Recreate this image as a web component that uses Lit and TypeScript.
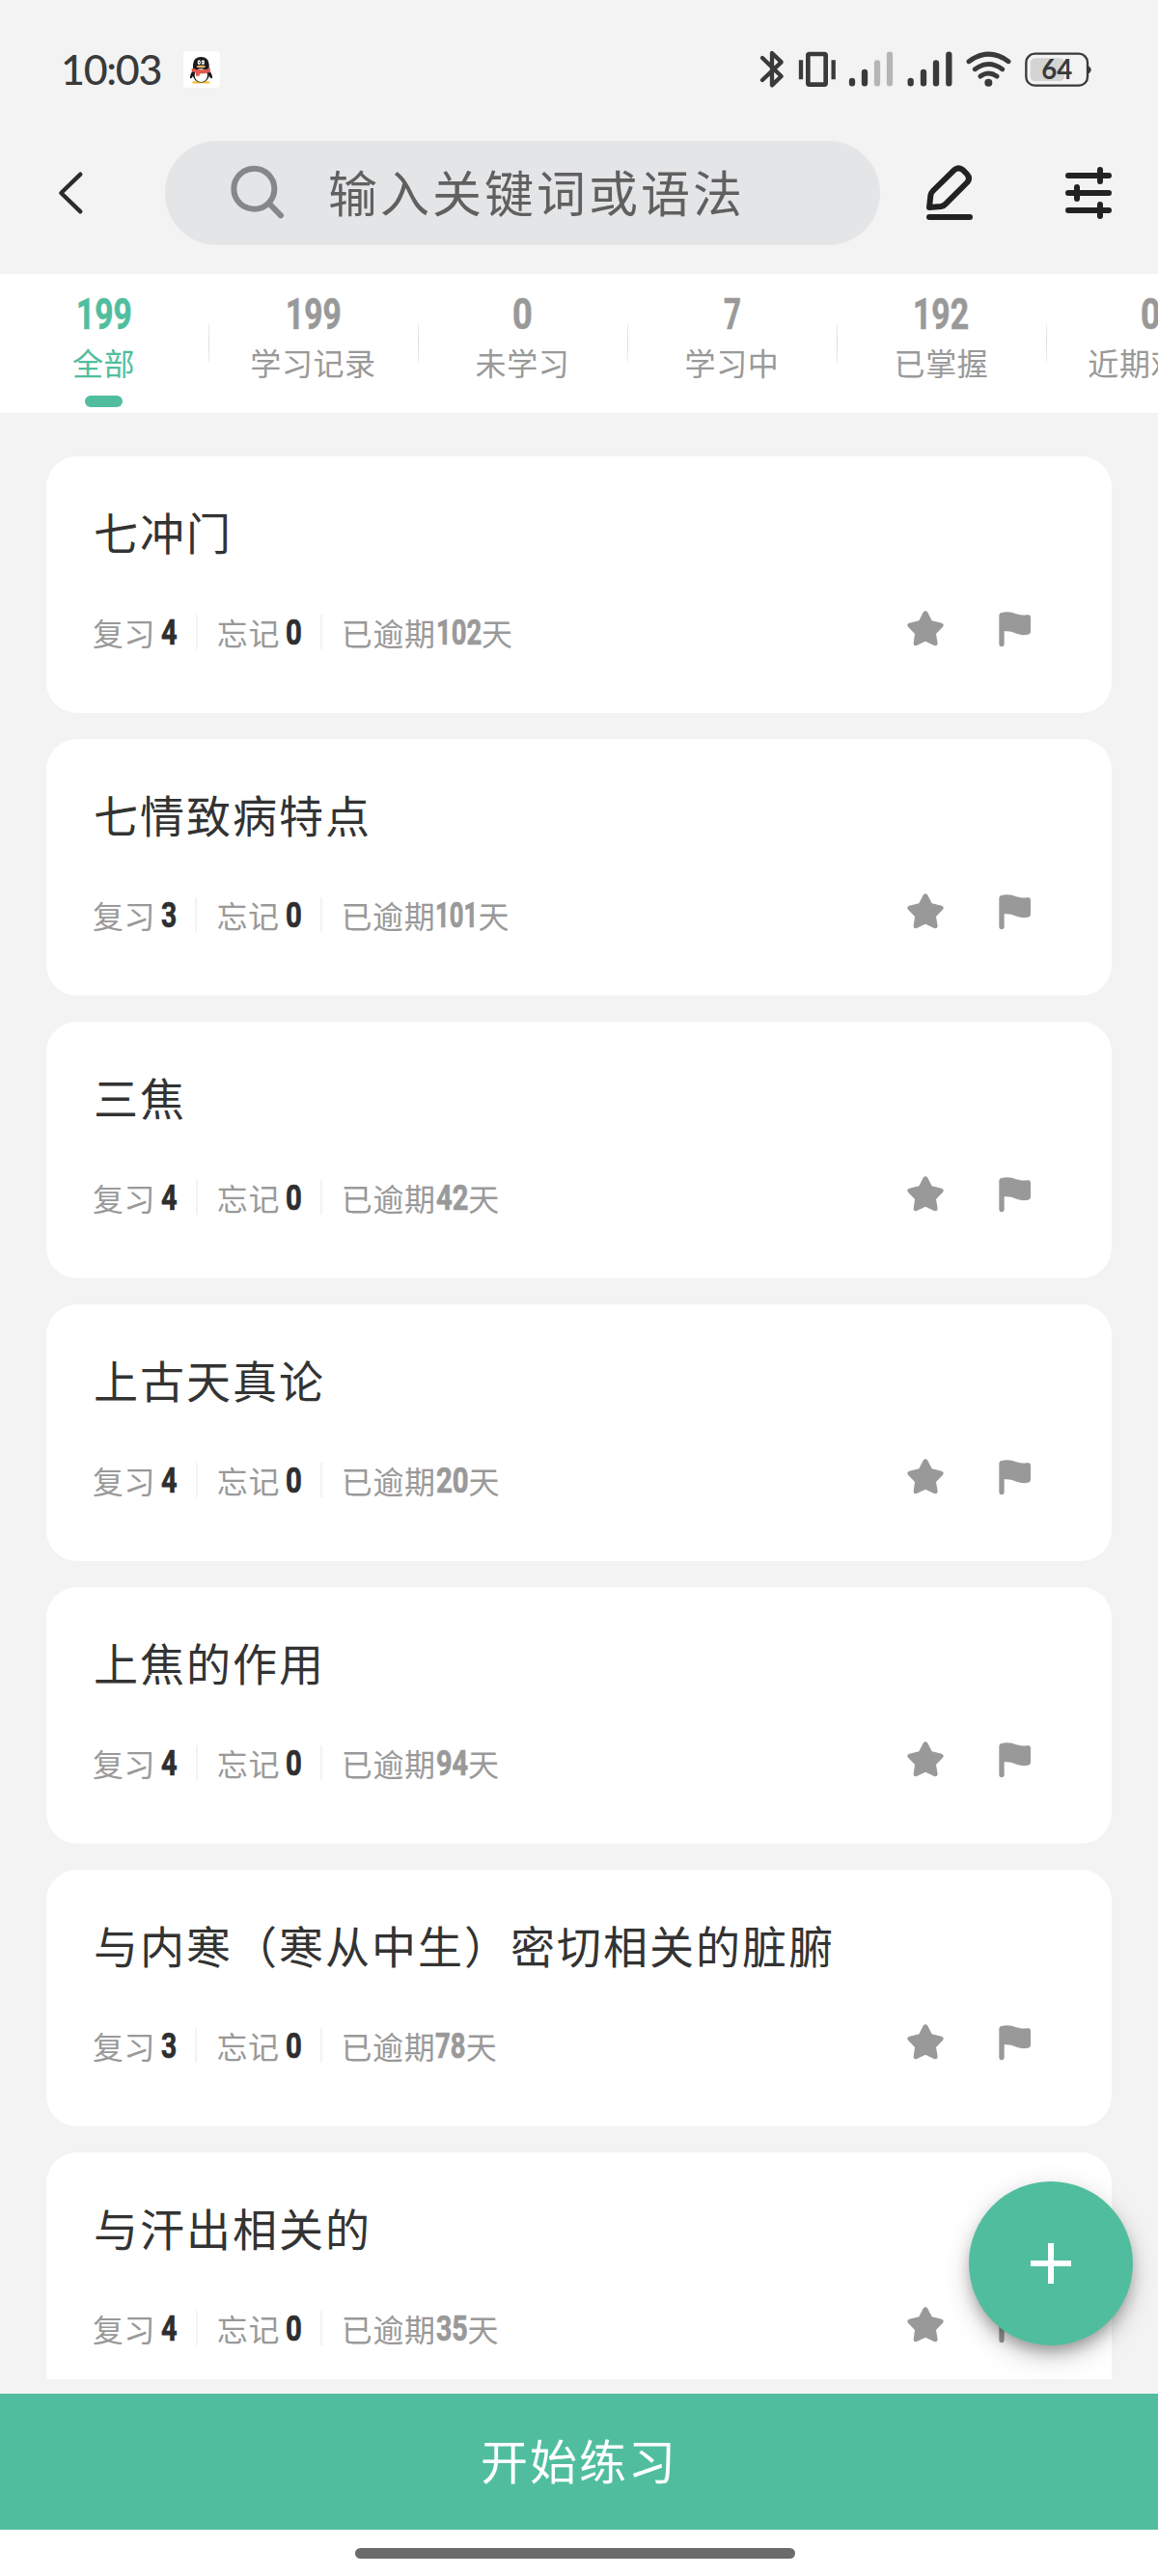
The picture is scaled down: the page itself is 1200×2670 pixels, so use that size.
import { LitElement, html, css, svg } from "lit";
import { customElement, property } from "lit/decorators.js";

/** Advance of each digit, in em, for the condensed numerals. */
const DIGIT_EM: Record<string, number> = {
  "0": 0.462, "1": 0.375, "2": 0.462, "3": 0.445, "4": 0.455,
  "5": 0.455, "6": 0.462, "7": 0.4, "8": 0.462, "9": 0.455,
};
const NATURAL_EM = 0.5755;

@customElement("slim-number")
class SlimNumber extends LitElement {
  @property() value = "";
  static styles = css`
    :host { display: inline-block; font-family: Roboto, "Liberation Sans", sans-serif; font-weight: 700; }
    .box { display: block; white-space: nowrap; }
    .digits { display: inline-block; transform-origin: 0 50%; -webkit-text-stroke: 0.7px currentColor; }
  `;
  render() {
    const em = [...this.value].reduce((sum, d) => sum + (DIGIT_EM[d] ?? 0.46), 0);
    const scale = em / (this.value.length * NATURAL_EM);
    return html`<span class="box" style="width:${em}em"><span class="digits" style="transform:scaleX(${scale})">${this.value}</span></span>`;
  }
}

@customElement("status-bar")
class StatusBar extends LitElement {
  static styles = css`
    :host { display: flex; align-items: center; height: 144px; padding: 0 66px 0 63px; box-sizing: border-box; color: #3a3a3a; }
    .time { font: 500 43px/44px Lato, Inter, sans-serif; letter-spacing: -1.3px; width: 127px; }
    .app { width: 38px; height: 38px; background: #fff; border-radius: 4px; }
    .app svg { display: block; }
    .icons { margin-left: auto; }
    .pct { font: 700 87px Lato, Inter, sans-serif; }
  `;
  render() {
    return html`
      <span class="time">10:03</span>
      <span class="app">
        <svg width="38" height="38" viewBox="570 99 114 114">
          <path d="M598 196q10-5 24 0v2h-22zM652 196q-10-5-24 0v2h22z" fill="#f2c230" stroke="#f2c230" stroke-width="3"/>
          <path d="M600 160q-10 10-9 24 5 1 9-8zM650 160q11 10 10 24-5 1-10-8z" fill="#1c1a1c"/>
          <ellipse cx="625" cy="170" rx="26" ry="27" fill="#1c1a1c"/>
          <ellipse cx="625" cy="174" rx="20" ry="21" fill="#fff"/>
          <path d="M600 154v-14q2-23 25-23t25 23v14z" fill="#1c1a1c"/>
          <path d="M596 152q29 9 58 0l-1 12q-15 6-32 5l-1 7h-11v-10q-8-1-13-4z" fill="#e0584f"/>
          <ellipse cx="619" cy="134" rx="5" ry="7" fill="#fff"/><ellipse cx="631" cy="134" rx="5" ry="7" fill="#fff"/>
          <circle cx="620" cy="134" r="2" fill="#1c1a1c"/><circle cx="630" cy="134" r="2" fill="#1c1a1c"/>
          <ellipse cx="625" cy="147" rx="14" ry="4" fill="#e9b56a"/>
        </svg>
      </span>
      <svg class="icons" width="348" height="42" viewBox="75 61 1044 126" fill="none" stroke="#3a3a3a" stroke-linecap="round" stroke-linejoin="round">
        <path d="M87 88 146 145 117 173V73L146 101 87 157" stroke-width="13"/>
        <rect x="229" y="76" width="55" height="95" rx="4" stroke-width="14"/>
        <path d="M207 101v47M308 101v47" stroke-width="13" stroke-linecap="square"/>
        <g stroke-width="19">
          <path d="M366 160v7M405 133v34"/><path d="M444 104v63M483 78v89" stroke="#b5b5b5"/>
          <path d="M548 160v7M588 133v34M627 104v63M667 78v89"/>
        </g>
        <g stroke-width="15"><path d="M729 99q62-45 123 0M748 123q42-31 85 0M765 145q25-18 51 0"/></g>
        <circle cx="790" cy="165" r="12" fill="#3a3a3a" stroke="none"/>
        <rect x="920" y="89" width="106" height="71" rx="14" fill="#d4d4d4" stroke="none"/>
        <rect x="907" y="75" width="191" height="99" rx="27" stroke-width="7"/>
        <path d="M1099 112q10 5 10 13t-10 13z" fill="#3a3a3a" stroke="none"/>
        <text class="pct" x="1003" y="155" text-anchor="middle" textLength="96" lengthAdjust="spacingAndGlyphs" fill="#3a3a3a" stroke="none">64</text>
      </svg>`;
  }
}

@customElement("search-header")
class SearchHeader extends LitElement {
  static styles = css`
    :host { display: flex; align-items: center; height: 140px; padding: 0 48px 28px 60px; box-sizing: border-box; }
    svg { display: block; flex: none; }
    .field { display: flex; align-items: center; width: 741px; height: 108px; border-radius: 54px; background: #e4e5e7; margin: 0 48px 0 83px; padding-left: 66px; box-sizing: border-box; }
    .hint { margin: -5px 0 0 45px; font: 400 51px/60px "Noto Sans CJK SC", sans-serif; letter-spacing: 3px; color: #606060; white-space: nowrap; }
    .edit { margin-right: 96px; }
  `;
  render() {
    return html`
      <svg width="28" height="48" viewBox="180 468 84 144" fill="none" stroke="#2b2b2b" stroke-width="13" stroke-linecap="round" stroke-linejoin="round"><path d="M250 482 190 540 250 598"/></svg>
      <div class="field">
        <svg width="58" height="58" viewBox="712 456 174 174" fill="none" stroke="#868789" stroke-width="18" stroke-linecap="round"><circle cx="791" cy="530" r="63"/><path d="M838 576 874 613"/></svg>
        <span class="hint">输入关键词或语法</span>
      </div>
      <svg class="edit" width="48" height="58" viewBox="600 420 144 174" fill="none" stroke="#222" stroke-width="18" stroke-linecap="round" stroke-linejoin="round"><path d="M609 552 613 515Q614 507 620 501L686 436Q700 424 714 436L725 447Q738 461 727 474L662 539Q655 547 645 549ZM609 582H735"/></svg>
      <svg width="48" height="58" viewBox="1032 423 144 174" fill="none" stroke="#222" stroke-width="18" stroke-linecap="round"><path d="M1041 456H1167M1041 510H1167M1041 564H1167M1140 438V474M1068 492V528M1140 546V582"/></svg>`;
  }
}

const TABS = [
  ["199", "全部"], ["199", "学习记录"], ["0", "未学习"],
  ["7", "学习中"], ["192", "已掌握"], ["0", "近期难点"],
];

@customElement("filter-tabs")
class FilterTabs extends LitElement {
  static styles = css`
    :host { display: flex; height: 144px; background: #fff; overflow: hidden; color: #999; }
    .tab { flex: none; width: 217px; box-sizing: border-box; padding-right: 2px; display: flex; flex-direction: column; align-items: center; position: relative; }
    .tab::after { content: ""; position: absolute; right: 0; top: 52px; width: 1px; height: 40px; background: linear-gradient(#eee, #ddd, #eee); }
    slim-number { font-size: 45px; line-height: 52px; margin-top: 16px; }
    .label { font: 400 32px/40px "Noto Sans CJK SC", sans-serif; letter-spacing: 0.6px; white-space: nowrap; margin-top: 3px; }
    .active { color: #50be9e; }
    .mark { width: 39px; height: 12px; border-radius: 6px; background: #50be9e; margin-top: 15px; }
  `;
  render() {
    return TABS.map(([count, label], i) => html`
      <div class="tab ${i === 0 ? "active" : ""}">
        <slim-number value=${count}></slim-number>
        <span class="label">${label}</span>
        ${i === 0 ? html`<span class="mark"></span>` : ""}
      </div>`);
  }
}

const starIcon = svg`<path d="M290 557Q297 549 304 557L317 583 347 590Q357 594 351 602L330 624 335 653Q334 663 324 660L297 647 270 660Q260 663 260 653L264 624 243 602Q237 594 247 590L277 583Z"/>`;
const flagIcon = svg`<path d="M526 567Q526 560 533 558C570 549 577 569 613 565Q624 563 624 572V617Q624 624 616 626C584 633 572 612 542 616V657Q541 664 534 664T526 657Z"/>`;

@customElement("word-card")
class WordCard extends LitElement {
  @property() heading = "";
  @property() reviews = "";
  @property() forgotten = "";
  @property() overdue = "";
  static styles = css`
    :host { display: block; flex: none; height: 266px; box-sizing: border-box; padding: 47px 81px 0 49px; background: #fff; border-radius: 32px; }
    .title { font: 400 46px/60px "Noto Sans CJK SC", sans-serif; letter-spacing: 2px; color: #333; white-space: nowrap; }
    .row { display: flex; align-items: center; height: 44px; margin: 53px 0 0 -1px; font: 400 32px/44px "Noto Sans CJK SC", sans-serif; letter-spacing: 0.6px; color: #999; white-space: nowrap; }
    slim-number { font-size: 36.5px; line-height: 44px; letter-spacing: 0; position: relative; top: 1px; }
    .strong { color: #2e2e2e; margin-left: 6px; }
    .sep { width: 2px; height: 36px; background: #f3f3f3; margin: 0 20px 0 19px; }
    .icon { fill: #999; display: block; position: relative; top: -3px; }
    .star { margin-left: auto; }
    .flag { margin-left: 56px; }
  `;
  render() {
    return html`
      <div class="title">${this.heading}</div>
      <div class="row">
        <span>复习</span><slim-number class="strong" value=${this.reviews}></slim-number>
        <span class="sep"></span>
        <span>忘记</span><slim-number class="strong" value=${this.forgotten}></slim-number>
        <span class="sep"></span>
        <span>已逾期</span><slim-number value=${this.overdue}></slim-number><span>天</span>
        <svg class="icon star" width="40" height="40" viewBox="237 549 120 120">${starIcon}</svg>
        <svg class="icon flag" width="36" height="40" viewBox="525 549 108 120">${flagIcon}</svg>
      </div>`;
  }
}

const WORDS = [
  ["七冲门", "4", "0", "102"],
  ["七情致病特点", "3", "0", "101"],
  ["三焦", "4", "0", "42"],
  ["上古天真论", "4", "0", "20"],
  ["上焦的作用", "4", "0", "94"],
  ["与内寒（寒从中生）密切相关的脏腑", "3", "0", "78"],
  ["与汗出相关的", "4", "0", "35"],
];

@customElement("app-root")
class AppRoot extends LitElement {
  static styles = css`
    :host { display: flex; flex-direction: column; position: relative; width: 1200px; height: 2670px; background: #f3f3f3; overflow: hidden; }
    .list { height: 2038px; box-sizing: border-box; padding: 45px 48px 0; display: flex; flex-direction: column; gap: 27px; overflow: hidden; }
    .start { margin-top: 15px; height: 141px; box-sizing: border-box; padding-bottom: 6px; display: flex; align-items: center; justify-content: center; background: #50be9e; color: #fff; font: 400 49px/60px "Noto Sans CJK SC", sans-serif; letter-spacing: 2px; }
    .home { flex: 1; background: #fff; display: flex; justify-content: center; padding-top: 19px; }
    .pill { width: 456px; height: 11px; border-radius: 6px; background: #6b6b6b; margin-right: 8px; }
    .fab { position: absolute; left: 1004px; top: 2261px; width: 170px; height: 170px; border-radius: 50%; background: #50be9e; display: flex; align-items: center; justify-content: center; box-shadow: 0 9px 15px -3px rgba(0,0,0,.3), 0 16px 28px rgba(0,0,0,.1), 0 3px 30px rgba(0,0,0,.09); }
  `;
  render() {
    return html`
      <status-bar></status-bar>
      <search-header></search-header>
      <filter-tabs></filter-tabs>
      <div class="list">
        ${WORDS.map(([t, r, f, o]) => html`<word-card .heading=${t} .reviews=${r} .forgotten=${f} .overdue=${o}></word-card>`)}
      </div>
      <div class="start">开始练习</div>
      <div class="home"><div class="pill"></div></div>
      <div class="fab"><svg width="42" height="42" viewBox="0 0 42 42" stroke="#fff" stroke-width="6"><path d="M0 21H42M21 0V42"/></svg></div>`;
  }
}
